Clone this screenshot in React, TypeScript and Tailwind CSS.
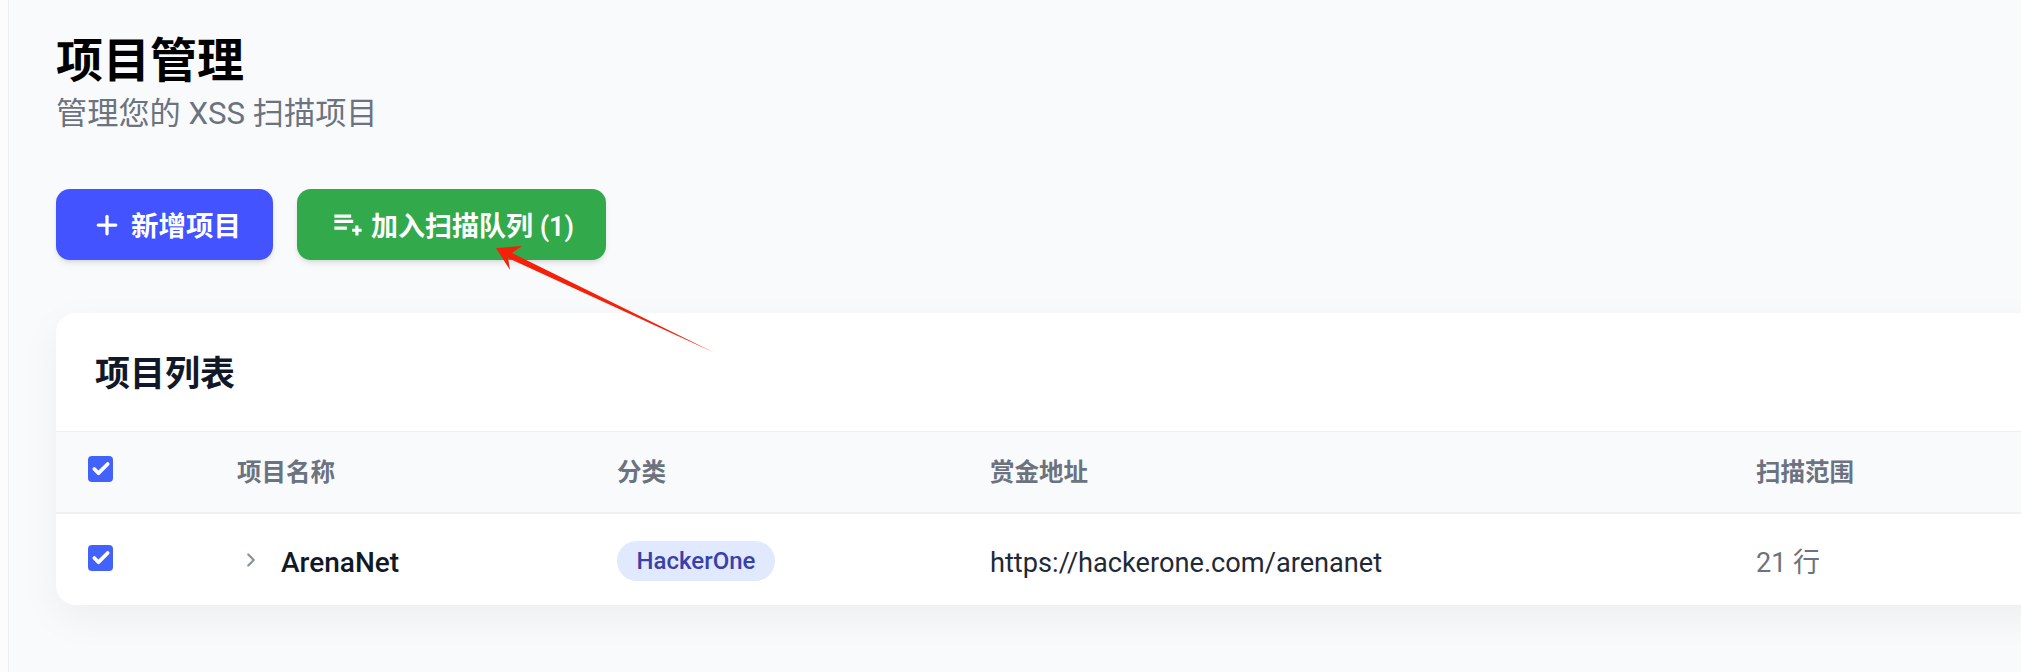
import { Plus, ChevronRight, Check } from "lucide-react";

const headers = [
  { label: "项目名称", className: "w-[380px]" },
  { label: "分类", className: "w-[373px]" },
  { label: "赏金地址", className: "w-[765px]" },
  { label: "扫描范围", className: "flex-1 pl-[1px]" },
];

const Tick = () => (
  <span className="flex h-[26px] w-[25px] items-center justify-center rounded-[4px] bg-[#4361fb]">
    <Check size={20} strokeWidth={4.5} className="text-white" />
  </span>
);

const PlaylistPlus = () => (
  <svg width="28" height="22" viewBox="0 0 26 21" fill="none" stroke="currentColor" strokeWidth="3">
    <path d="M0 2h16M0 7h18M0 13.5h12M21.5 11v9.5M17 15.5h9" />
  </svg>
);

export default function App() {
  return (
    <div className="relative flex h-[672px] w-full overflow-hidden bg-white font-['Roboto','Noto_Sans_CJK_SC',sans-serif]">
      <div className="w-[9px] shrink-0 border-r border-[#eceef1] bg-[#fcfcfd]" />
      <main className="min-w-0 flex-1 bg-[#f9fafc] pl-[47px]">
        <h1 className="mt-[34px] text-[47px] leading-[54px] font-bold text-black">项目管理</h1>
        <p className="mt-[5px] text-[31.2px] leading-[42px] text-[#6b7280]">管理您的 XSS 扫描项目</p>

        <div className="mt-[54px] flex gap-[24px]">
          <button className="flex h-[71px] w-[217px] items-center gap-[9px] rounded-[14px] bg-[#4353ff] pl-[36px] text-[27.5px] font-semibold text-white shadow-md">
            <Plus size={30} strokeWidth={2.6} />
            <span className="pt-[5px]">新增项目</span>
          </button>
          <button className="flex h-[71px] w-[309px] items-center gap-[9px] rounded-[14px] bg-[#32a94a] pl-[37px] text-[27px] font-semibold text-white shadow-md">
            <PlaylistPlus />
            <span className="pt-[5px]">加入扫描队列 (1)</span>
          </button>
        </div>

        <section className="-mr-10 mt-[53px] rounded-[20px] bg-white shadow-[0_13px_40px_rgba(0,0,0,0.05)]">
          <h2 className="flex h-[118px] items-center pt-[7px] pl-[39px] text-[35px] font-bold text-[#111827]">项目列表</h2>
          <div className="flex h-[83px] items-center border-t border-b-2 border-[#eef0f3] bg-[#f9fafc]">
            <div className="w-[181px] shrink-0 pl-[32px]">
              <div className="-mt-[7px]">
                <Tick />
              </div>
            </div>
            {headers.map((h) => (
              <div key={h.label} className={`shrink-0 pt-[2px] text-[24.5px] font-semibold text-[#6b7280] ${h.className}`}>
                {h.label}
              </div>
            ))}
          </div>
          <div className="flex h-[91px] items-center">
            <div className="w-[181px] shrink-0 pl-[32px]">
              <div className="-mt-[3px]">
                <Tick />
              </div>
            </div>
            <div className="flex w-[380px] shrink-0 items-center gap-[19px] pl-[3px] text-[28px] font-medium text-[#111827]">
              <ChevronRight size={22} strokeWidth={2.4} className="text-[#8b919c]" />
              <span className="pt-[6px]">ArenaNet</span>
            </div>
            <div className="w-[373px] shrink-0 pt-[2px]">
              <span className="inline-flex h-[40px] w-[158px] items-center justify-center rounded-full bg-[#e0e9fd] text-[24px] font-medium text-[#3b3fa8]">
                HackerOne
              </span>
            </div>
            <div className="w-[765px] shrink-0 pt-[7px] text-[27.2px] text-[#1f2937]">https://hackerone.com/arenanet</div>
            <div className="flex-1 pt-[7px] pl-[1px] text-[27px] text-[#6b7280]">21 行</div>
          </div>
        </section>
      </main>

      <svg className="absolute top-0 left-0" width="2021" height="672" fill="none">
        <path d="M496 248 L522 246 L512 253 L715 353 L508 258 L510 270 Z" fill="#f5200a" />
      </svg>
    </div>
  );
}
